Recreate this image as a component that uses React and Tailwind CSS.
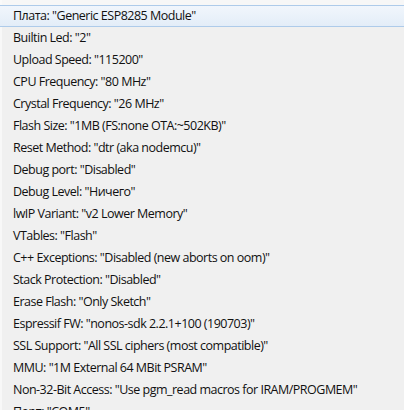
const ITEMS = [
  'Плата: "Generic ESP8285 Module"',
  'Builtin Led: "2"',
  'Upload Speed: "115200"',
  'CPU Frequency: "80 MHz"',
  'Crystal Frequency: "26 MHz"',
  'Flash Size: "1MB (FS:none OTA:~502KB)"',
  'Reset Method: "dtr (aka nodemcu)"',
  'Debug port: "Disabled"',
  'Debug Level: "Ничего"',
  'lwIP Variant: "v2 Lower Memory"',
  'VTables: "Flash"',
  'C++ Exceptions: "Disabled (new aborts on oom)"',
  'Stack Protection: "Disabled"',
  'Erase Flash: "Only Sketch"',
  'Espressif FW: "nonos-sdk 2.2.1+100 (190703)"',
  'SSL Support: "All SSL ciphers (most compatible)"',
  'MMU: "1M External 64 MBit PSRAM"',
  'Non-32-Bit Access: "Use pgm_read macros for IRAM/PROGMEM"',
  'Порт: "COM5"',
];

export default function App() {
  return (
    <div className="h-[410px] w-[404px] overflow-hidden bg-[#f0f0f0] font-['Open_Sans',sans-serif] text-[12.5px] tracking-[-0.5px] text-[#111]">
      <div className="h-[5px] border-l-2 border-[#fafafa] bg-[#f7f7f7]" />
      {ITEMS.map((label, i) => (
        <div
          key={label}
          className={
            i === 0
              ? "flex h-[22px] items-center border-y border-[#aecbea] bg-gradient-to-b from-[#f1f6fc] to-[#e3edf8] pl-[13px] leading-none"
              : "flex h-[22px] items-center border-l-2 border-[#f8f8f8] pl-[11px] leading-none"
          }
        >
          <span className="whitespace-nowrap">{label}</span>
        </div>
      ))}
    </div>
  );
}
